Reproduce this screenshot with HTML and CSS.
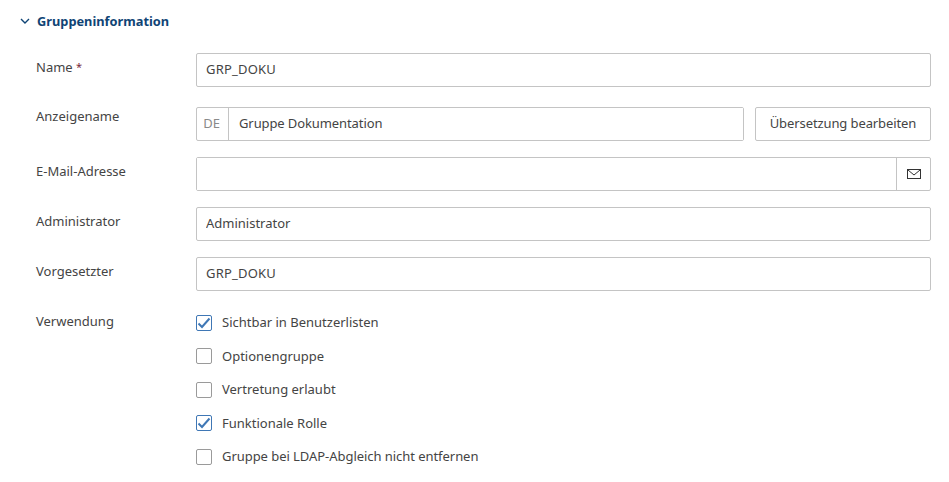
FILE: index.html
```html
<!DOCTYPE html>
<html lang="de">
<head>
    <meta charset="UTF-8">
    <title>Gruppeninformation</title>
    <link rel="stylesheet" href="styles.css">
</head>
<body>
    <section class="panel">
        <h2 class="panel-title">
            <svg class="chevron" width="10" height="6" viewBox="0 0 10 6"><path d="M1 1l4 4 4-4" fill="none" stroke="#0f4475" stroke-width="1.4"/></svg>
            Gruppeninformation
        </h2>

        <div class="row first">
            <label class="label">Name <span class="req">*</span></label>
            <input class="field wide" type="text" value="GRP_DOKU">
        </div>

        <div class="row wide-gap">
            <label class="label label-up">Anzeigename</label>
            <div class="group grow">
                <span class="addon-left">DE</span>
                <input class="field plain tight" type="text" value="Gruppe Dokumentation">
            </div>
            <button class="btn">Übersetzung bearbeiten</button>
        </div>

        <div class="row">
            <label class="label">E-Mail-Adresse</label>
            <div class="group grow">
                <input class="field plain" type="text">
                <span class="addon-right">
                    <svg width="14" height="10" viewBox="0 0 14 10"><rect x="0.5" y="0.5" width="13" height="9" fill="none" stroke="#333" stroke-width="1"/><path d="M1 1l6 5 6-5" fill="none" stroke="#333" stroke-width="1"/></svg>
                </span>
            </div>
        </div>

        <div class="row">
            <label class="label">Administrator</label>
            <input class="field" type="text" value="Administrator">
        </div>

        <div class="row">
            <label class="label">Vorgesetzter</label>
            <input class="field wide" type="text" value="GRP_DOKU">
        </div>

        <div class="row checks-row">
            <label class="label">Verwendung</label>
            <div class="checks">
                <div class="check"><span class="box on"><svg width="14" height="12" viewBox="0 0 14 12"><path d="M1.5 6.5l3.5 3.5 7.5-8.5" fill="none" stroke="#3f77b5" stroke-width="2"/></svg></span><span class="check-text">Sichtbar in Benutzerlisten</span></div>
                <div class="check"><span class="box"></span><span class="check-text">Optionengruppe</span></div>
                <div class="check"><span class="box"></span><span class="check-text">Vertretung erlaubt</span></div>
                <div class="check"><span class="box on"><svg width="14" height="12" viewBox="0 0 14 12"><path d="M1.5 6.5l3.5 3.5 7.5-8.5" fill="none" stroke="#3f77b5" stroke-width="2"/></svg></span><span class="check-text">Funktionale Rolle</span></div>
                <div class="check"><span class="box"></span><span class="check-text long">Gruppe bei LDAP-Abgleich nicht entfernen</span></div>
            </div>
        </div>
    </section>
</body>
</html>
```

FILE: styles.css
```css
* {
    box-sizing: border-box;
}

body {
    margin: 0;
    background-color: #fff;
    font-family: "Noto Sans", sans-serif;
    font-size: 13px;
    color: #444;
}

.panel {
    padding: 12px 18px 0 20px;
}

.panel-title {
    display: flex;
    align-items: center;
    gap: 7px;
    height: 18px;
    margin: 0;
    font-size: 12.8px;
    font-weight: 700;
    color: #0f4475;
}

.row {
    display: flex;
    gap: 11px;
    margin-top: 16px;
    padding-left: 16px;
}

.row.first {
    margin-top: 23px;
}

.row.wide-gap {
    margin-top: 20px;
}

.label {
    flex: none;
    width: 149px;
    padding-top: 5px;
    line-height: 18px;
}

.label-up {
    padding-top: 0;
}

.req {
    font-size: 11px;
    vertical-align: 1px;
    color: #7a2a3c;
}

.field {
    flex: 1;
    min-width: 0;
    height: 34px;
    padding: 0 9px 2px;
    border: 1px solid #c4c4c4;
    border-radius: 2px;
    font: inherit;
    color: #444;
    outline: none;
}

.field.plain {
    height: 32px;
    padding-left: 10px;
    border: none;
    border-radius: 0;
}

.wide {
    letter-spacing: 0.2px;
}

.tight {
    letter-spacing: -0.1px;
}

.group {
    display: flex;
    height: 34px;
    border: 1px solid #c4c4c4;
    border-radius: 2px;
}

.grow {
    flex: 1;
}

.addon-left {
    width: 32px;
    padding-right: 2px;
    border-right: 1px solid #c4c4c4;
    color: #8a8a8a;
    line-height: 30px;
    text-align: center;
}

.addon-right {
    display: flex;
    align-items: center;
    justify-content: center;
    width: 34px;
    border-left: 1px solid #c4c4c4;
}

.btn {
    flex: none;
    width: 176px;
    height: 34px;
    padding: 0 0 2px;
    background-color: #fff;
    border: 1px solid #c4c4c4;
    border-radius: 2px;
    font: inherit;
    letter-spacing: -0.1px;
    color: #444;
}

.checks {
    display: flex;
    flex-direction: column;
    gap: 16px;
    padding-top: 7px;
}

.check {
    display: flex;
    align-items: center;
    gap: 10px;
    height: 17.5px;
}

.check-text {
    margin-top: -1.5px;
}

.check-text.long {
    letter-spacing: -0.05px;
}

.box {
    display: flex;
    align-items: center;
    justify-content: center;
    width: 16px;
    height: 16px;
    border: 1px solid #9a9a9a;
    border-radius: 2px;
}

.box.on {
    border-color: #3f77b5;
}
```
